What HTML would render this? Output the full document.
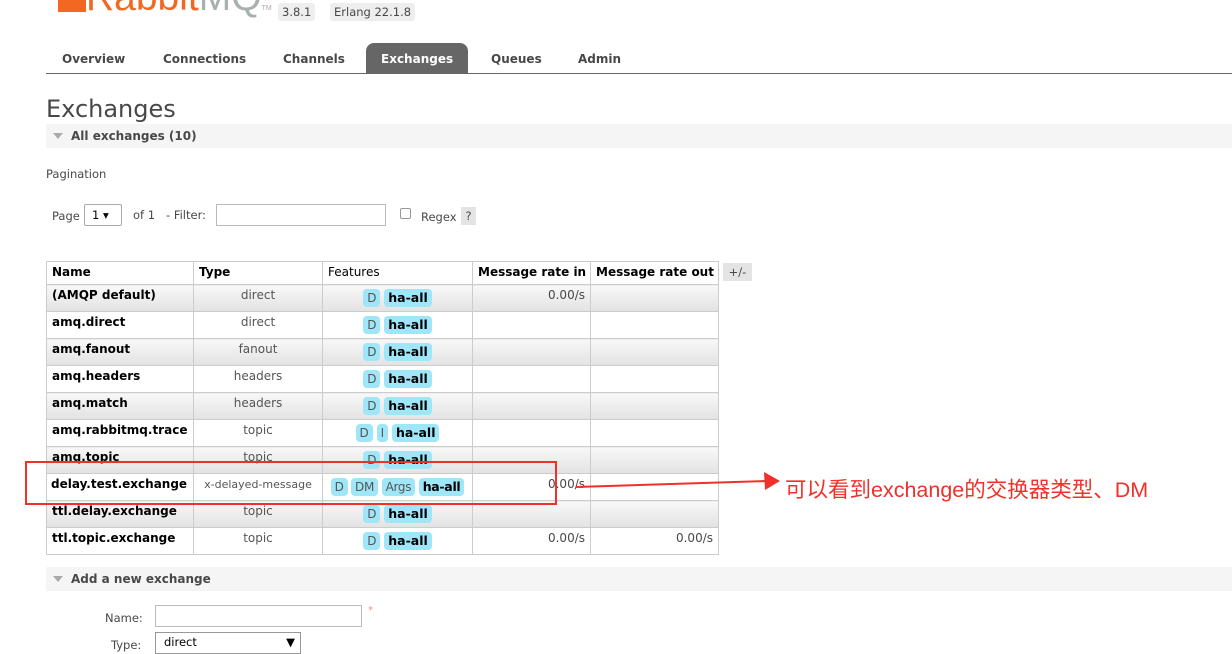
<!DOCTYPE html>
<html><head><meta charset="utf-8"><style>
body{margin:0;width:1232px;height:646px;overflow:hidden;background:#fff;font-family:"DejaVu Sans","Liberation Sans",sans-serif;font-size:11.5px;color:#484848;position:relative}
.abs{position:absolute;white-space:nowrap}
.logo{left:58px;top:-24px;font-family:"Liberation Sans",sans-serif;font-size:39px;color:#f26822}
.ver{top:3px;height:18px;background:#eee;border-radius:3px;font-size:11.5px;line-height:18px;padding:0 4px;color:#484848}
.nav{left:46px;top:43px;width:1186px;height:30px;border-bottom:1px solid #666}
.nav span{position:absolute;top:9px;font-weight:bold;color:#484848;font-size:12px}
.nav .act{background:#666;color:#fff;border-radius:8px 8px 0 0;top:0;height:30px;line-height:32px;padding:0 15px;left:320px}
h1{position:absolute;left:46px;top:95px;margin:0;font-weight:normal;font-size:24px;color:#484848;font-family:"DejaVu Sans",sans-serif}
.sec{left:46px;width:1186px;height:24px;background:#f5f5f5;font-weight:bold;font-size:12px;line-height:24px}
.sec i{display:inline-block;width:0;height:0;border-left:5px solid transparent;border-right:5px solid transparent;border-top:6px solid #aaa;margin:0 8px 1px 7px}
table{position:absolute;left:46px;top:261px;border-collapse:collapse;table-layout:fixed;width:672px}
td,th{border:1px solid #ccc;height:27px;padding:0 5px;font-size:12px;vertical-align:top;line-height:21px;white-space:nowrap;overflow:hidden;box-sizing:border-box}
th{text-align:left;color:#000;font-weight:bold;height:23px;line-height:21px}
tr.g td{background:linear-gradient(#f8f8f8,#e2e2e2)}
td.n{font-weight:bold;color:#000}
td.t{text-align:center;color:#555}
td.f{text-align:center;padding:4px 0 0;line-height:18px}
td.r{text-align:right}
.b{display:inline-block;background:#9ee6f8;border-radius:4px;padding:0 4px;color:#555;margin:0}
.b.h{color:#000;font-weight:bold;font-size:12.5px}
</style></head><body>
<div class="abs logo"><span style="display:inline-block;width:28px;height:28px;background:#f26822;vertical-align:-2px"></span><span style="color:#f26822">Rabbit</span><span style="color:#a8b0b0">MQ</span><span style="font-size:7px;color:#aaa">TM</span></div>
<div class="abs ver" style="left:278px">3.8.1</div>
<div class="abs ver" style="left:330px">Erlang 22.1.8</div>
<div class="abs nav">
<span style="left:16px">Overview</span><span style="left:117px">Connections</span><span style="left:237px">Channels</span><span class="act">Exchanges</span><span style="left:445px">Queues</span><span style="left:532px">Admin</span></div>
<h1>Exchanges</h1>
<div class="abs sec" style="top:124px"><i></i>All exchanges (10)</div>
<div class="abs" style="left:46px;top:167px">Pagination</div>
<div class="abs" style="left:52px;top:209px">Page</div>
<div class="abs" style="left:84px;top:204px;width:38px;height:22px;border:1px solid #aaa;border-radius:2px;line-height:20px;padding-left:7px;box-sizing:border-box;color:#000">1 &#9662;</div>
<div class="abs" style="left:133px;top:208px">of 1 &nbsp; - Filter:</div>
<div class="abs" style="left:216px;top:204px;width:170px;height:22px;border:1px solid #bbb;box-sizing:border-box"></div>
<div class="abs" style="left:400px;top:208px;width:11px;height:11px;border:1px solid #999;border-radius:2px;box-sizing:border-box"></div>
<div class="abs" style="left:421px;top:210px">Regex</div>
<div class="abs" style="left:461px;top:207px;width:15px;height:18px;background:#e4e4e4;text-align:center;line-height:18px">?</div>
<table>
<col style="width:147px"><col style="width:129px"><col style="width:150px"><col style="width:118px"><col style="width:128px">
<tr><th>Name</th><th>Type</th><th style="font-weight:normal">Features</th><th>Message rate in</th><th>Message rate out</th></tr>
<tr class="g"><td class="n">(AMQP default)</td><td class="t">direct</td><td class="f"><span class="b">D</span> <span class="b h">ha-all</span></td><td class="r">0.00/s</td><td></td></tr>
<tr><td class="n">amq.direct</td><td class="t">direct</td><td class="f"><span class="b">D</span> <span class="b h">ha-all</span></td><td></td><td></td></tr>
<tr class="g"><td class="n">amq.fanout</td><td class="t">fanout</td><td class="f"><span class="b">D</span> <span class="b h">ha-all</span></td><td></td><td></td></tr>
<tr><td class="n">amq.headers</td><td class="t">headers</td><td class="f"><span class="b">D</span> <span class="b h">ha-all</span></td><td></td><td></td></tr>
<tr class="g"><td class="n">amq.match</td><td class="t">headers</td><td class="f"><span class="b">D</span> <span class="b h">ha-all</span></td><td></td><td></td></tr>
<tr><td class="n">amq.rabbitmq.trace</td><td class="t">topic</td><td class="f"><span class="b">D</span> <span class="b">I</span> <span class="b h">ha-all</span></td><td></td><td></td></tr>
<tr class="g"><td class="n">amq.topic</td><td class="t">topic</td><td class="f"><span class="b">D</span> <span class="b h">ha-all</span></td><td></td><td></td></tr>
<tr><td class="n" style="padding-left:4px">delay.test.exchange</td><td class="t" style="font-size:11px;padding:0 2px">x-delayed-message</td><td class="f" style="letter-spacing:-0.3px"><span class="b">D</span> <span class="b">DM</span> <span class="b">Args</span> <span class="b h">ha-all</span></td><td class="r">0.00/s</td><td></td></tr>
<tr class="g"><td class="n">ttl.delay.exchange</td><td class="t">topic</td><td class="f"><span class="b">D</span> <span class="b h">ha-all</span></td><td></td><td></td></tr>
<tr><td class="n">ttl.topic.exchange</td><td class="t">topic</td><td class="f"><span class="b">D</span> <span class="b h">ha-all</span></td><td class="r">0.00/s</td><td class="r">0.00/s</td></tr>
</table>
<div class="abs" style="left:723px;top:263px;width:29px;height:18px;background:#e4e4e4;text-align:center;line-height:18px">+/-</div>
<div class="abs" style="left:25px;top:461px;width:532px;height:44px;border:2px solid #f0302a;box-sizing:border-box"></div>
<svg class="abs" style="left:0;top:0" width="1232" height="646"><line x1="576" y1="487" x2="768" y2="481" stroke="#f0302a" stroke-width="2"/><polygon points="764,472 780,481 765,490" fill="#f0302a"/></svg>
<div class="abs" style="left:785px;top:473px;font-size:21.5px;color:#f0302a;font-family:'Liberation Sans','Noto Sans CJK SC',sans-serif">可以看到exchange的交换器类型、DM</div>
<div class="abs sec" style="top:567px"><i></i>Add a new exchange</div>
<div class="abs" style="left:105px;top:611px">Name:</div>
<div class="abs" style="left:155px;top:605px;width:207px;height:22px;border:1px solid #bbb;box-sizing:border-box"></div>
<div class="abs" style="left:368px;top:605px;color:#f88;font-size:10px">*</div>
<div class="abs" style="left:111px;top:638px">Type:</div>
<div class="abs" style="left:155px;top:632px;width:146px;height:22px;border:1px solid #999;box-sizing:border-box;padding-left:8px;line-height:18px;color:#000">direct<span style="position:absolute;right:5px">&#9660;</span></div>
</body></html>
